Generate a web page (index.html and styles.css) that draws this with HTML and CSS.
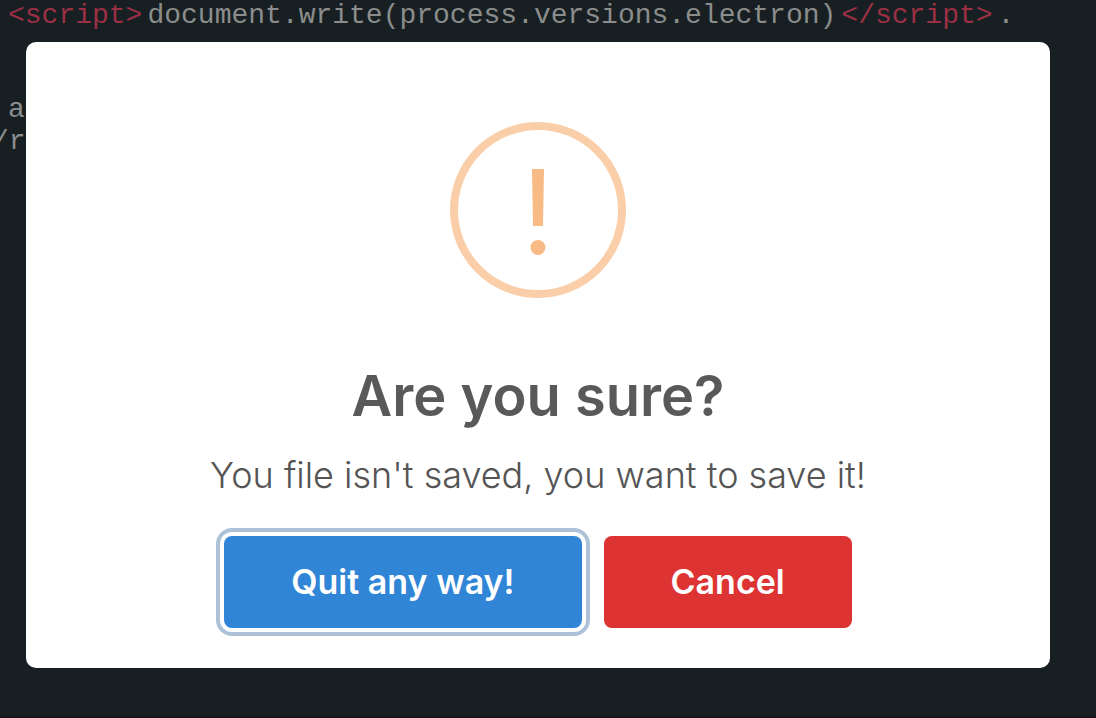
FILE: index.html
```html
<!DOCTYPE html>
<html lang="en">
<head>
<meta charset="utf-8">
<title>Are you sure?</title>
<link rel="stylesheet" href="styles.css">
</head>
<body>
<main class="page">
  <div class="editor">
    <code class="line line-top"><span class="tag">&lt;script&gt;</span><span>document.write(process.versions.electron)</span><span class="tag">&lt;/script&gt;</span><span>.</span></code>
    <code class="line">a</code>
    <code class="line line-last">/r</code>
  </div>
  <section class="dialog" role="dialog" aria-labelledby="title" aria-describedby="message">
    <svg class="icon" viewBox="0 0 176 176" aria-hidden="true">
      <circle cx="88" cy="88" r="84" fill="none" stroke="#facea8" stroke-width="8"/>
      <path d="M82 47H94L93 104H83Z" fill="#f8bb86"/>
      <circle cx="88" cy="125.500" r="7.500" fill="#f8bb86"/>
    </svg>
    <h1 class="title" id="title">Are you sure?</h1>
    <p class="message" id="message">You file isn't saved, you want to save it!</p>
    <div class="actions">
      <button class="button confirm" type="button">Quit any way!</button>
      <button class="button cancel" type="button">Cancel</button>
    </div>
  </section>
</main>
</body>
</html>
```
FILE: styles.css
```css
* { box-sizing: border-box; }
body {
  margin: 0;
  background: #181f22;
  font-family: Inter, "Liberation Sans", sans-serif;
}
.page {
  display: grid;
  min-height: 100vh;
  padding: 42px 46px 48px 26px;
  border-bottom: 2px solid #1a161c;
  position: relative;
}
.editor {
  position: absolute;
  inset: 0;
  overflow: hidden;
}
.line {
  display: flex;
  gap: 5px;
  padding-left: 8px;
  font: 28px/32px "Liberation Mono", monospace;
  color: #8b8d8c;
  white-space: pre;
}
.line-top { margin-bottom: 62px; }
.line-last { padding: 0; margin-left: -8px; }
.tag { color: #9b3044; }
.dialog {
  position: relative;
  display: flex;
  flex-direction: column;
  align-items: center;
  align-self: start;
  padding: 80px 40px 40px;
  border-radius: 10px;
  background: #fff;
  color: #545454;
  text-align: center;
}
.icon { width: 176px; height: 176px; }
.title {
  margin: 60px 0 17px;
  font-size: 56px;
  line-height: 76px;
  font-weight: 600;
  color: #595959;
}
.message {
  margin: 0 0 37px;
  font-size: 36px;
  line-height: 48px;
  font-weight: 300;
}
.actions {
  display: flex;
  gap: 22px;
}
.button {
  height: 92px;
  padding: 0 67px;
  border: 0;
  border-radius: 8px;
  color: #fff;
  font: 600 34px/44px Inter, "Liberation Sans", sans-serif;
}
.confirm {
  background: #3085d6;
  box-shadow: 0 0 0 4px #fff, 0 0 0 8px #adc2d8;
}
.cancel { background: #dd3333; }
```
